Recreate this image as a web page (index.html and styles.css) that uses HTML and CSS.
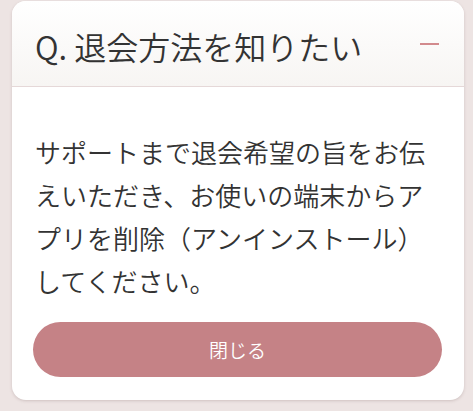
FILE: index.html
```html
<!DOCTYPE html>
<html lang="ja">
<head>
<meta charset="utf-8">
<link rel="stylesheet" href="styles.css">
</head>
<body>
<div class="page">
  <div class="card">
    <div class="card-header">
      <h2 class="title">Q. 退会方法を知りたい</h2>
      <span class="minus"></span>
    </div>
    <div class="card-body">
      <p class="answer">サポートまで退会希望の旨をお伝えいただき、お使いの端末からアプリを削除（アンインストール）してください。</p>
      <button class="close-btn">閉じる</button>
    </div>
  </div>
</div>
</body>
</html>
```
FILE: styles.css
```css
html, body {
  margin: 0;
  padding: 0;
  background: #ede4e3;
  font-family: "Noto Sans CJK JP", "Noto Sans", sans-serif;
}
.page {
  padding: 1px 9px 11px 12px;
}
.card {
  background: #fff;
  border-radius: 14px;
  box-shadow: 0 1px 3px rgba(120, 90, 90, 0.25);
  overflow: hidden;
  height: 399px;
  box-sizing: border-box;
}
.card-header {
  display: flex;
  align-items: center;
  justify-content: space-between;
  height: 86px;
  box-sizing: border-box;
  padding: 4px 25px 0 23px;
  background: linear-gradient(#ffffff, #f7f5f3);
  border-bottom: 1px solid #e5d8d8;
}
.title {
  margin: 0;
  font-weight: 350;
  font-size: 32px;
  line-height: 40px;
  color: #333;
}
.minus {
  width: 19px;
  height: 2px;
  background: #d28a8d;
  margin-bottom: 4px;
}
.card-body {
  padding: 43px 22px 0 21px;
}
.answer {
  margin: 0 0 0 2px;
  font-size: 26px;
  font-weight: 350;
  line-height: 43px;
  color: #333;
}
.close-btn {
  display: block;
  width: 409px;
  height: 55px;
  margin-top: 20px;
  border: none;
  border-radius: 28px;
  background: #c58286;
  color: #fff;
  font-family: "Noto Sans CJK JP", "Noto Sans", sans-serif;
  font-size: 19px;
  font-weight: 350;
  padding: 0;
}
```
